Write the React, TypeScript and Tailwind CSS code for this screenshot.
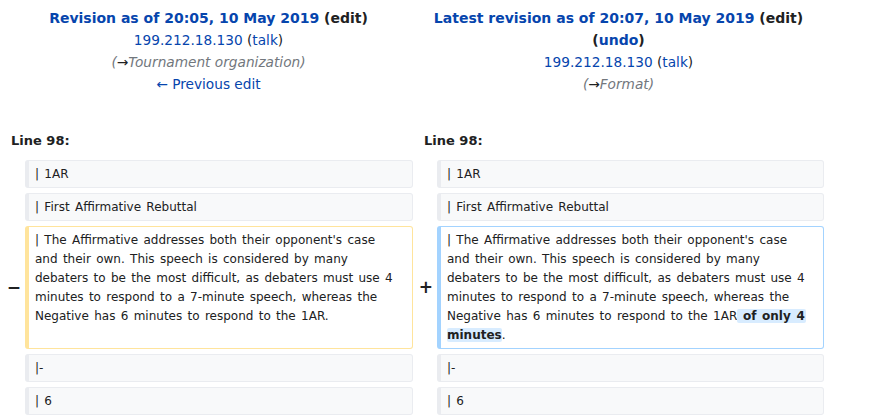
const font = "font-['DejaVu_Sans',sans-serif]";

function Box({
  kind = 'context',
  children,
}: {
  kind?: 'context' | 'deleted' | 'added';
  children: React.ReactNode;
}) {
  const tone =
    kind === 'deleted'
      ? 'bg-white border-[#ffe49c]'
      : kind === 'added'
        ? 'bg-white border-[#a3d3ff]'
        : 'bg-[#f8f9fa] border-[#eaecf0]';
  return (
    <div
      className={`rounded-[3px] border border-l-4 ${tone} pl-[6px] pr-2 py-[3.5px] text-[12px] leading-[19px] [word-spacing:1.5px] text-[#202122] whitespace-nowrap`}
    >
      {children}
    </div>
  );
}

function Marker({ sign }: { sign?: string }) {
  return (
    <div className="flex items-center justify-end text-[17px] font-bold text-[#202122]">
      {sign}
    </div>
  );
}

const removed = [
  "| The Affirmative addresses both their opponent's case",
  'and their own. This speech is considered by many',
  'debaters to be the most difficult, as debaters must use 4',
  'minutes to respond to a 7-minute speech, whereas the',
  'Negative has 6 minutes to respond to the 1AR.',
];

export default function App() {
  return (
    <div className={`${font} w-[874px] h-[420px] bg-white pt-[7px] overflow-hidden`}>
      <div className="grid grid-cols-[413px_411px] text-[13.7px] leading-[22px] text-center">
        <div className="pl-1">
          <div className="font-bold text-[14px]">
            <a className="text-[#0645ad]">Revision as of 20:05, 10 May 2019</a>{' '}
            <span className="text-[#202122]">(edit)</span>
          </div>
          <div>
            <a className="text-[#0645ad]">199.212.18.130</a>{' '}
            <span className="text-[#202122]">
              (<a className="text-[#0645ad]">talk</a>)
            </span>
          </div>
          <div className="italic text-[#72777d]">
            (<span className="text-[#202122]">→</span>Tournament organization)
          </div>
          <div>
            <a className="text-[#0645ad]">← Previous edit</a>
          </div>
        </div>
        <div>
          <div className="font-bold text-[14px]">
            <a className="text-[#0645ad]">Latest revision as of 20:07, 10 May 2019</a>{' '}
            <span className="text-[#202122]">(edit)</span>
          </div>
          <div className="font-bold text-[14px] text-[#202122]">
            (<a className="text-[#0645ad]">undo</a>)
          </div>
          <div>
            <a className="text-[#0645ad]">199.212.18.130</a>{' '}
            <span className="text-[#202122]">
              (<a className="text-[#0645ad]">talk</a>)
            </span>
          </div>
          <div className="italic text-[#72777d]">
            (<span className="text-[#202122]">→</span>Format)
          </div>
        </div>
      </div>

      <div className="grid grid-cols-[413px_411px] mt-[35px] text-[13px] leading-[22px] font-bold text-[#202122]">
        <div className="pl-[11px]">Line 98:</div>
        <div className="pl-[11px]">Line 98:</div>
      </div>

      <div className="mt-[8px] pl-1 grid grid-cols-[17px_388px_16px_387px] gap-x-1 gap-y-[5px]">
        <Marker />
        <Box>| 1AR</Box>
        <Marker />
        <Box>| 1AR</Box>

        <Marker />
        <Box>| First Affirmative Rebuttal</Box>
        <Marker />
        <Box>| First Affirmative Rebuttal</Box>

        <Marker sign="−" />
        <Box kind="deleted">
          {removed.map((l) => (
            <div key={l}>{l}</div>
          ))}
        </Box>
        <Marker sign="+" />
        <Box kind="added">
          {removed.slice(0, 4).map((l) => (
            <div key={l}>{l}</div>
          ))}
          <div>
            Negative has 6 minutes to respond to the 1AR
            <span className="font-bold bg-[#d8ecff] rounded-[2px] pr-[1px]"> of only 4</span>
          </div>
          <div>
            <span className="font-bold bg-[#d8ecff] rounded-[2px]">minutes</span>.
          </div>
        </Box>

        <Marker />
        <Box>|-</Box>
        <Marker />
        <Box>|-</Box>

        <Marker />
        <Box>| 6</Box>
        <Marker />
        <Box>| 6</Box>
      </div>
    </div>
  );
}
